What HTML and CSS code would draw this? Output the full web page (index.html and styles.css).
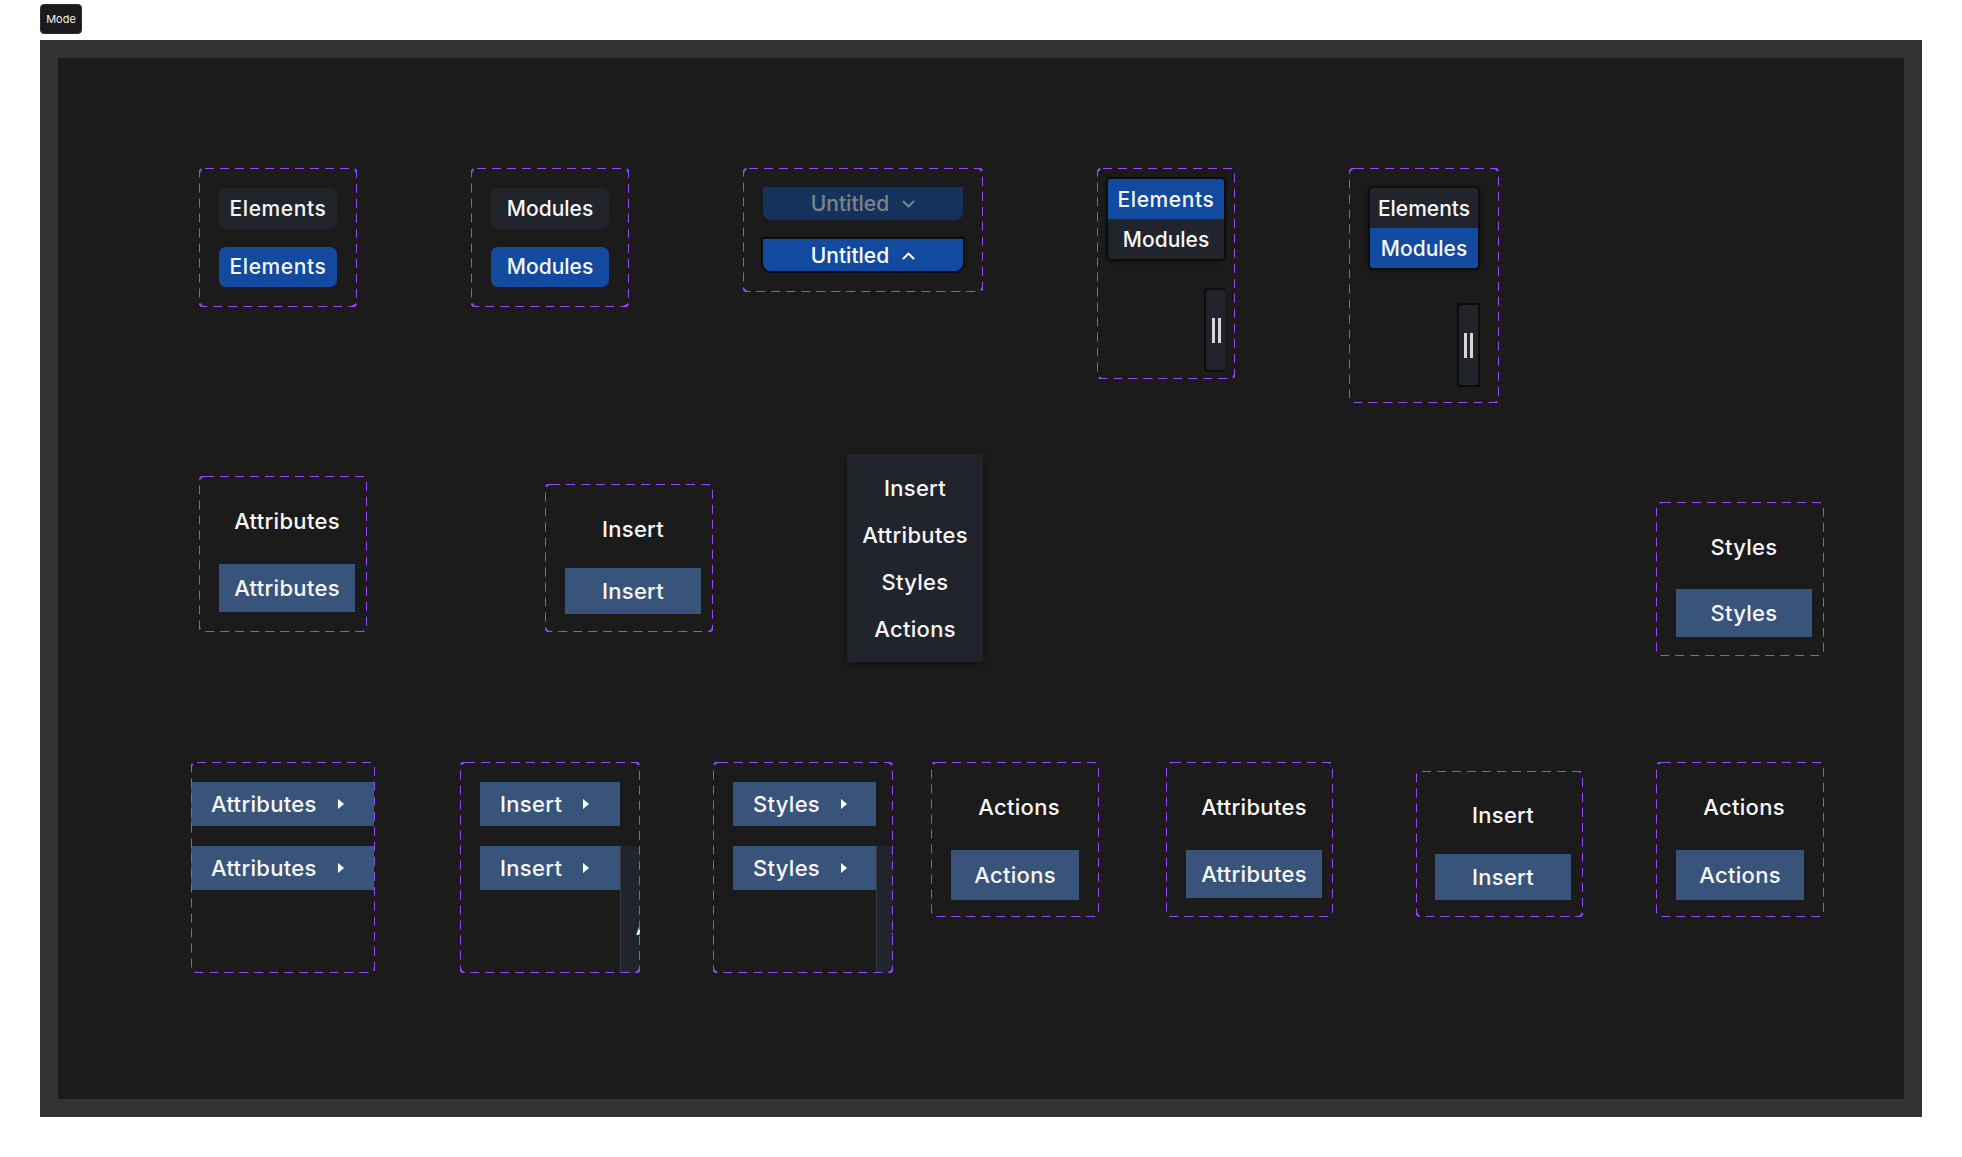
FILE: index.html
```html
<!DOCTYPE html>
<html lang="en">
	<head>
		<meta charset="UTF-8" />
		<meta name="viewport" content="width=device-width, initial-scale=1.0" />
		<title>Sidebar Components</title>
		<link rel="stylesheet" href="styles.css">
	</head>
	<body>
		<button class="mode-btn">Mode</button>

		<main class="stage">
			<!-- Row 1: tabs, selects, switchers -->
			<div class="frame f-elements">
				<div class="pill dark">Elements</div>
				<div class="pill blue">Elements</div>
			</div>

			<div class="frame f-modules">
				<div class="pill dark">Modules</div>
				<div class="pill blue">Modules</div>
			</div>

			<div class="frame f-untitled">
				<div class="select closed">
					<span>Untitled</span>
					<svg width="13" height="8" viewBox="0 0 13 8"><polyline points="1.5,1.5 6.5,6.5 11.5,1.5" fill="none" stroke="currentColor" stroke-width="2" stroke-linecap="round" stroke-linejoin="round"/></svg>
				</div>
				<div class="select open">
					<span>Untitled</span>
					<svg width="13" height="8" viewBox="0 0 13 8"><polyline points="1.5,6.5 6.5,1.5 11.5,6.5" fill="none" stroke="currentColor" stroke-width="2" stroke-linecap="round" stroke-linejoin="round"/></svg>
				</div>
			</div>

			<div class="frame f-switch-a">
				<div class="switcher">
					<div class="switch-item blue wide">Elements</div>
					<div class="switch-item">Modules</div>
				</div>
				<div class="handle clipped"><i></i><i></i></div>
			</div>

			<div class="frame f-switch-b">
				<div class="switcher">
					<div class="switch-item">Elements</div>
					<div class="switch-item blue">Modules</div>
				</div>
				<div class="handle"><i></i><i></i></div>
			</div>

			<!-- Row 2: nav labels and menu -->
			<div class="frame stack f-attr">
				<div class="label">Attributes</div>
				<div class="nav-btn">Attributes</div>
			</div>

			<div class="frame stack f-insert">
				<div class="label">Insert</div>
				<div class="nav-btn">Insert</div>
			</div>

			<div class="menu m-main">
				<div class="menu-item">Insert</div>
				<div class="menu-item">Attributes</div>
				<div class="menu-item">Styles</div>
				<div class="menu-item">Actions</div>
			</div>

			<div class="frame stack f-styles">
				<div class="label">Styles</div>
				<div class="nav-btn">Styles</div>
			</div>

			<!-- Row 3: submenu triggers and nav states -->
			<div class="frame subs f-sub-attr">
				<div class="sub-btn"><span>Attributes</span><b class="arrow"></b></div>
				<div class="sub-btn"><span>Attributes</span><b class="arrow"></b></div>
			</div>

			<div class="frame subs f-sub-insert">
				<div class="sub-btn"><span>Insert</span><b class="arrow"></b></div>
				<div class="sub-btn">
					<span>Insert</span><b class="arrow"></b>
					<div class="menu flyout">
						<div class="menu-item">Insert</div>
						<div class="menu-item">Attributes</div>
						<div class="menu-item">Styles</div>
						<div class="menu-item">Actions</div>
					</div>
				</div>
			</div>

			<div class="frame subs f-sub-styles">
				<div class="sub-btn"><span>Styles</span><b class="arrow"></b></div>
				<div class="sub-btn">
					<span>Styles</span><b class="arrow"></b>
					<div class="menu flyout">
						<div class="menu-item">Insert</div>
						<div class="menu-item">Attributes</div>
						<div class="menu-item">Styles</div>
						<div class="menu-item">Actions</div>
					</div>
				</div>
			</div>

			<div class="frame stack f-actions-a">
				<div class="label">Actions</div>
				<div class="nav-btn narrow tall">Actions</div>
			</div>

			<div class="frame stack f-attr-b">
				<div class="label">Attributes</div>
				<div class="nav-btn">Attributes</div>
			</div>

			<div class="frame stack f-insert-b">
				<div class="label short">Insert</div>
				<div class="nav-btn">Insert</div>
			</div>

			<div class="frame stack f-actions-b">
				<div class="label">Actions</div>
				<div class="nav-btn narrow tall">Actions</div>
			</div>
		</main>
	</body>
</html>
```

FILE: styles.css
```css
body {
	margin: 0;
	padding: 40px;
	background-color: #ffffff;
	font-family: Inter, "Noto Sans", sans-serif;
}

.mode-btn {
	position: absolute;
	top: 4px;
	left: 40px;
	width: 42px;
	height: 30px;
	padding: 0;
	background-color: #1b1b1b;
	color: #f2f2f2;
	border: 1px solid #2e2e2e;
	border-radius: 4px;
	font-family: Inter, sans-serif;
	font-size: 11px;
}

.stage {
	position: relative;
	height: 1077px;
	box-sizing: border-box;
	border: 18px solid #333333;
	background-color: #1b1b1b;
	color: #f7f7f7;
	font-weight: 500;
}

/* component frames with the dashed purple outline */
.frame {
	position: absolute;
	box-sizing: border-box;
	display: flex;
	flex-direction: column;
}

.frame::after {
	content: "";
	position: absolute;
	inset: 0;
	pointer-events: none;
	background-image: url("data:image/svg+xml,%3Csvg xmlns='http://www.w3.org/2000/svg' width='100%25' height='100%25'%3E%3Crect width='100%25' height='100%25' rx='6' fill='none' stroke='%239747FF' stroke-width='2' stroke-dasharray='9 6'/%3E%3C/svg%3E");
}

/* row 1 */
.f-elements,
.f-modules {
	width: 158px;
	height: 139px;
	padding: 20px;
	gap: 18px;
}

.f-elements { left: 141px; top: 110px; }
.f-modules { left: 413px; top: 110px; }

.pill {
	width: 118px;
	height: 41px;
	border-radius: 7px;
	display: flex;
	align-items: center;
	justify-content: center;
	font-size: 21px;
}

.f-elements .pill { letter-spacing: 0.6px; }

.dark { background-color: #21242b; }
.blue { background-color: #114a9f; }

.f-untitled {
	left: 685px;
	top: 110px;
	width: 240px;
	height: 124px;
	padding: 19px 20px;
	gap: 19px;
}

.select {
	width: 200px;
	height: 33px;
	display: flex;
	align-items: center;
	justify-content: center;
	gap: 13px;
	border-radius: 0 0 8px 8px;
	font-size: 21px;
}

.select svg { margin-top: 1px; }

.select.closed {
	background-color: #15325d;
	color: #7f838a;
}

.select.open {
	height: 32px;
	background-color: #114a9f;
	box-shadow: 0 0 0 2px #0c0c0c;
	color: #ffffff;
}

.f-switch-a {
	left: 1039px;
	top: 110px;
	width: 138px;
	height: 211px;
	padding: 9px 9px 7px;
}

.f-switch-b {
	left: 1291px;
	top: 110px;
	width: 150px;
	height: 235px;
	padding: 18px 19px 16px;
}

.switcher {
	border: 2px solid #0c0c0c;
	border-radius: 5px;
	overflow: hidden;
	background-color: #21242b;
	box-shadow: 0 1px 4px rgba(0, 0, 0, 0.3);
}

.f-switch-a .switcher { width: 116px; }
.f-switch-b .switcher { width: 108px; }

.switch-item {
	height: 40px;
	display: flex;
	align-items: center;
	justify-content: center;
	font-size: 21px;
}

.switch-item.wide { letter-spacing: 0.6px; }

.handle {
	margin-top: auto;
	align-self: flex-end;
	box-sizing: border-box;
	width: 23px;
	height: 84px;
	background-color: #21242b;
	border: 2px solid #0c0c0c;
	border-radius: 4px 0 0 4px;
	display: flex;
	align-items: center;
	justify-content: center;
	gap: 3px;
}

.handle.clipped {
	width: 21px;
	margin-right: 1px;
	border-right: none;
	padding-left: 2px;
}

.handle i {
	width: 3px;
	height: 25px;
	background-color: #d6d6d6;
}

/* label + nav button stacks */
.stack {
	width: 168px;
	padding: 20px 12px 0 20px;
	gap: 18px;
}

.label,
.nav-btn {
	width: 136px;
	display: flex;
	align-items: center;
	justify-content: center;
	font-size: 22px;
	letter-spacing: 0.3px;
}

.label { height: 50px; }
.label.short { height: 48px; }

.nav-btn {
	height: 48px;
	background-color: #39547a;
}

.nav-btn.narrow { width: 128px; }
.nav-btn.tall { height: 50px; }

.f-attr { left: 141px; top: 418px; height: 156px; }
.f-insert { left: 487px; top: 426px; height: 148px; gap: 14px; }
.f-insert .nav-btn { height: 46px; }
.f-styles { left: 1598px; top: 444px; height: 154px; gap: 17px; }

.f-actions-a { left: 873px; top: 704px; height: 155px; }
.f-attr-b { left: 1108px; top: 704px; width: 167px; height: 155px; }
.f-insert-b { left: 1358px; top: 713px; width: 167px; height: 146px; padding-left: 19px; gap: 15px; }
.f-insert-b .nav-btn { height: 46px; }
.f-actions-b { left: 1598px; top: 704px; height: 155px; }

/* menus */
.menu {
	position: absolute;
	width: 136px;
	box-sizing: border-box;
	padding: 10px 0;
	background-color: #21242b;
	border-radius: 3px;
	box-shadow: 0 2px 6px rgba(0, 0, 0, 0.35);
}

.m-main {
	left: 789px;
	top: 396px;
	height: 208px;
}

.menu-item {
	height: 47px;
	display: flex;
	align-items: center;
	justify-content: center;
	font-size: 22px;
	letter-spacing: 0.3px;
}

/* submenu triggers */
.subs {
	height: 211px;
	padding-top: 20px;
	gap: 20px;
	overflow: hidden;
}

.f-sub-attr { left: 133px; top: 704px; width: 184px; }
.f-sub-insert { left: 402px; top: 704px; width: 180px; padding-left: 20px; }
.f-sub-styles { left: 655px; top: 704px; width: 180px; padding-left: 20px; }

.sub-btn {
	position: relative;
	height: 44px;
	box-sizing: border-box;
	padding-left: 20px;
	display: flex;
	align-items: center;
	gap: 21px;
	background-color: #39547a;
	font-size: 22px;
	letter-spacing: 0.3px;
}

.f-sub-attr .sub-btn { width: 183px; }
.f-sub-insert .sub-btn { width: 140px; }
.f-sub-styles .sub-btn { width: 143px; }

.arrow {
	width: 0;
	height: 0;
	border-left: 6px solid #ffffff;
	border-top: 5px solid transparent;
	border-bottom: 5px solid transparent;
}

.flyout {
	left: 100%;
	top: 0;
	height: 208px;
	border-left: 1px solid #353a45;
	border-radius: 0;
	box-shadow: none;
}
```
